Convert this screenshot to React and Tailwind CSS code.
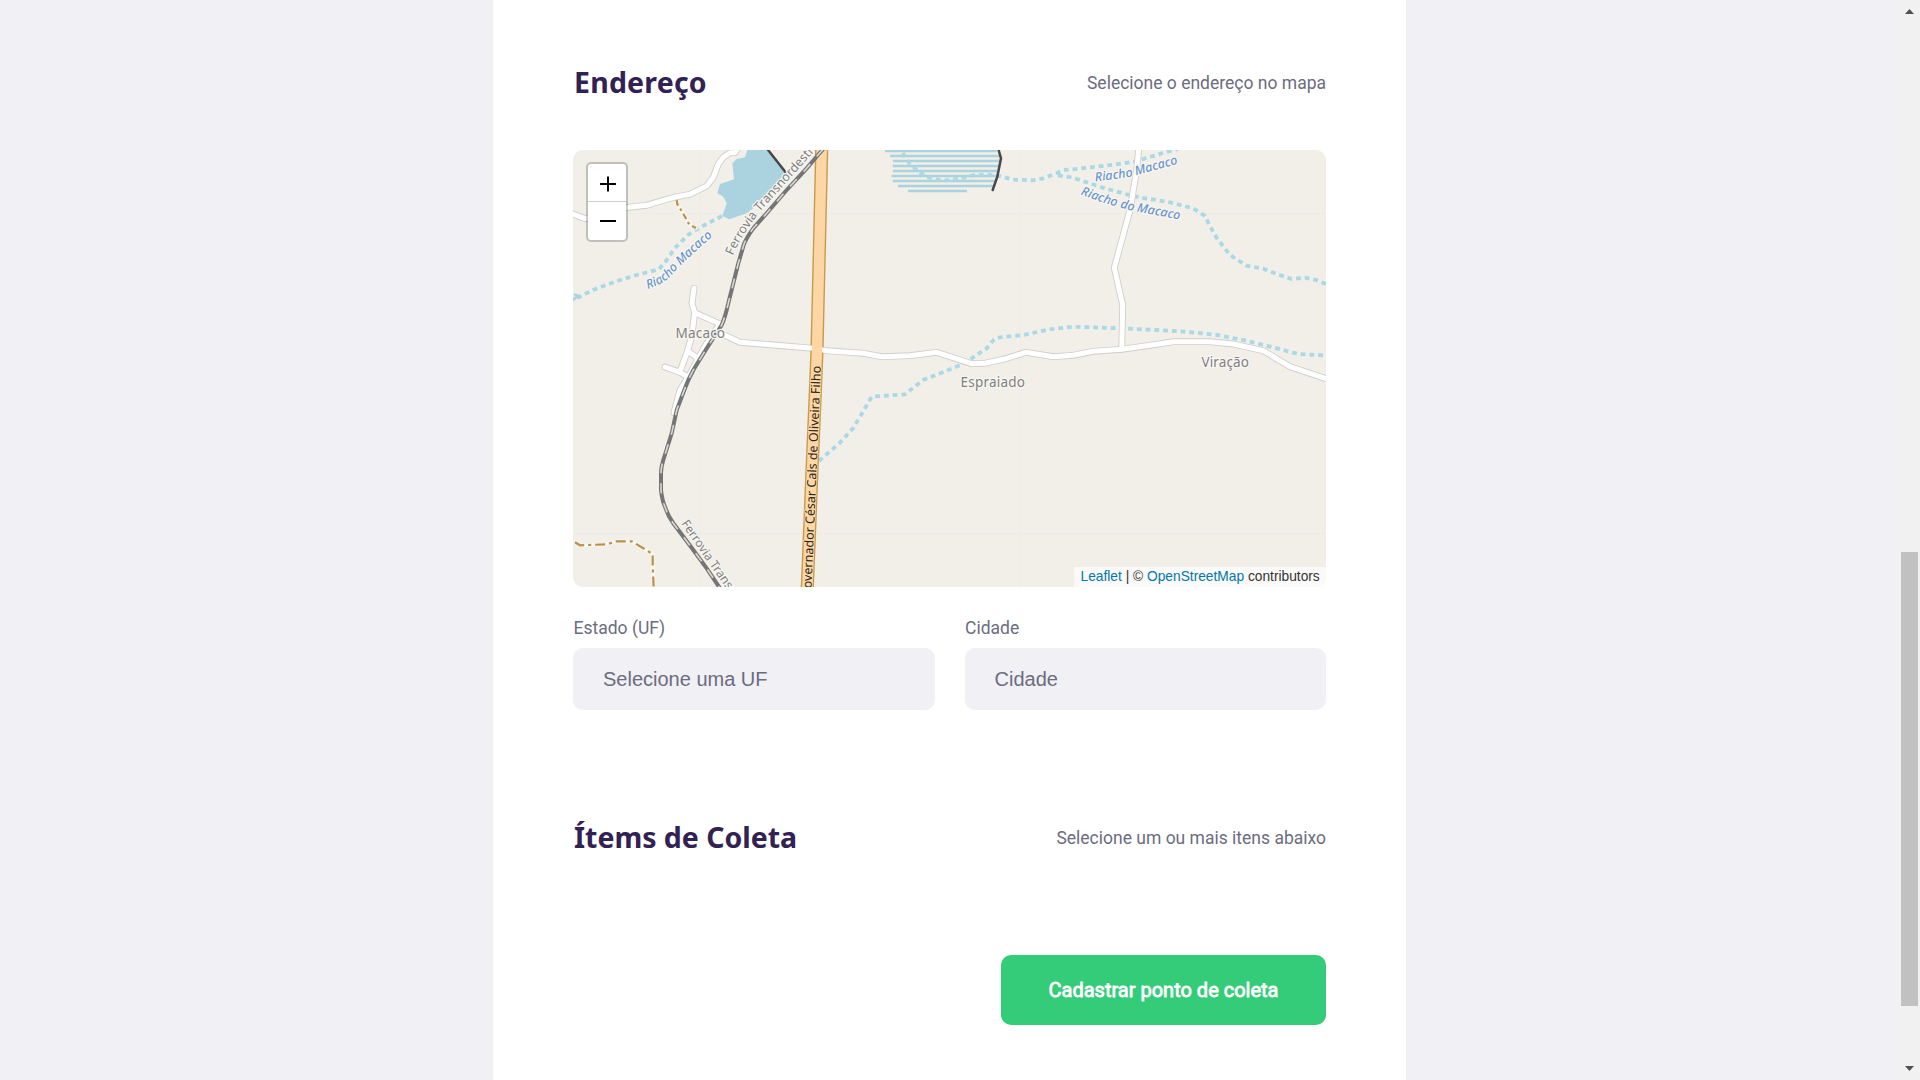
const minorRoads = [
  "M573 214L585 218.7L603 214L628.3 207.3L646.7 205.3L663.3 200.3L675 197L690 194.3L706.7 186L713.3 177.3L718.3 164L723.3 157.3L730 152.7L735 152.7L738 148",
  "M694 288.3L692 303.3L694.7 312.7L720 324",
  "M694.7 312.7L691.7 336.7L686.7 353.3L680 371.7",
  "M720 324L706.7 343.3L698.3 358.3L688.3 377L680 390L674 412.7",
  "M688.3 351.7L698.3 358.3",
  "M665 367L680 372.3L688 377",
  "M717 331.5L740 342.3L773.3 345L813.3 348.3L826.7 350.7L840 351.7L863.3 353.3L881.7 356.7L910 355.7L936.7 352.3L953.3 357.7L971.7 363.7L985 363.3L1003.3 359.3L1026 352.3L1053.3 356.7L1073.3 355.3L1093.3 351.3L1121.7 349.3L1150 345.3L1173.3 341.7L1210 341.7L1233.3 344L1263.3 350.7L1290 366.7L1328 379.3",
  "M1138.7 149L1136.7 170L1130 210L1120 246.7L1114.3 267.7L1122.7 305L1121.7 349.3",
];

const streams = [
  "M722 216L700 227.3L688 235L675 248L666.7 260L659 269.3L636.7 275L615 281.7L593 290L581.7 295.7L573 300",
  "M902.7 153L910 164L920 172.7L928 177.3L943 180.7L960 178.7L973 175.3L986.7 174.3L1000 176L1013 179.7L1033 180.3L1043 178.3L1056.7 173.3L1063.3 170L1073 169.3L1103 166L1133 162L1147 158L1163 153L1178 149",
  "M1058 175.3L1073 177.7L1103 187.7L1130 195.3L1141.7 197.7L1170 202.3L1193 208.3L1205 216L1210 226L1216.7 238L1230 255L1246.7 265.7L1263 268.7L1276.7 274L1291.7 279L1305 277.7L1315 279.7L1327 284.5",
  "M819 461L840 442.7L853 428.3L863 411.7L871.7 396.7L905 394.3L923 380L940 373.3L963 364L986.7 348.3L994 339.5L1000 337.3L1023 335L1050 329.3L1073 326.7L1120 328.3L1156.7 330L1186.7 331.7L1216.7 335L1243 340L1273 347.3L1298 354L1327 355.7",
];

const wetland = [
  [885, 996.7, 151], [890, 999, 156], [893, 999, 161], [892.7, 998.7, 166],
  [893, 997.3, 171], [891.7, 999, 176], [892.7, 995, 181], [898, 993, 186], [908, 967, 191],
];

const railway =
  "M823.3 149L818 155L806.7 168.3L786.7 190L766.7 213.3L753.3 228.3Q747 237 744 244L738.3 263.3L733.3 283.3L728.3 303.3Q725 318 721.7 325L706.7 348.3L693.3 370Q688 380 685 388.3L676.7 410L671.7 433.3L663.3 460Q661 467 661 473.3L661 490Q662 500 665 506.7Q668 516 673.3 523.3L693.3 550L706.7 568.3L720 588.3";

const highway = "M821.7 149L817 350L815 400L812 470L807.3 588";

const tracks = [
  ["M676.7 200L677.3 204L685 216.7L689.3 224.7L696 228", "6 3.5 2.5 3.5"],
  ["M575 542.3L580 545.3L606.7 544.3L616.7 541.3L631.7 541.3L643.3 548.3L652.7 554L652.7 566.7L653.7 588", "10 4 3 4"],
];

function PathLabel({ id, d, children, end, ...rest }) {
  return (
    <>
      <path id={id} d={d} fill="none" />
      <text {...rest} textAnchor={end ? "end" : "start"}>
        <textPath href={"#" + id} startOffset={end ? "100%" : "0"}>{children}</textPath>
      </text>
    </>
  );
}

function MapDrawing() {
  const halo = { paintOrder: "stroke", stroke: "#f8f6f2", strokeWidth: 2.5, strokeLinejoin: "round" };
  const gray = { ...halo, fill: "#808080" };
  const blue = { ...halo, fill: "#6a95cd", fontStyle: "italic", fontSize: 12.5, fontWeight: 500 };
  return (
    <svg viewBox="573 150 753 437" className="block h-full w-full" preserveAspectRatio="none" fontFamily="'Noto Sans', sans-serif">
      <rect x="573" y="150" width="753" height="437" fill="#f2efe9" />
      <path d="M700.5 150V587M1020.5 150V587M573 213.5H1326M573 533.5H1326" stroke="#eeebe6" strokeWidth="1" />
      <path d="M747.7 149L766 149L786 172.7L773 187L760 203L746.7 213.3L729.3 219.3L722.3 216L726.7 203.3L723.3 196.7L717.3 193.3L720 184L734 179.3L732.3 163.3L736.7 159L745 157.3Z" fill="#aad3df" />
      {wetland.map(([a, b, y]) => (
        <path key={y} d={`M${a} ${y}H${b}`} stroke="#aad3df" strokeWidth="2.6" />
      ))}
      <g fill="none" stroke="#aad8e4" strokeWidth="3.8" strokeDasharray="4.8 3.95">
        {streams.map((d) => <path key={d} d={d} />)}
      </g>
      <path d="M573 300L579 295M574 294L580 297" stroke="#aad3df" strokeWidth="2.5" />
      <g fill="none" stroke="#484848" strokeWidth="2.5" strokeLinecap="round">
        <path d="M767.3 149L786 172.7" />
        <path d="M998.3 149L1001 158.3L997.3 176.7L992.7 190" />
      </g>
      {tracks.map(([d, dash]) => (
        <g key={d} fill="none" strokeLinecap="round">
          <path d={d} stroke="#f8f6f0" strokeWidth="3.8" />
          <path d={d} stroke="#b8924a" strokeWidth="2.2" strokeLinecap="butt" strokeDasharray={dash} />
        </g>
      ))}
      <g fill="none" strokeLinejoin="round" strokeLinecap="round">
        <g stroke="#cfcecb" strokeWidth="6.8">
          {minorRoads.map((d) => <path key={d} d={d} />)}
        </g>
        <path d={highway} stroke="#c99a4a" strokeWidth="13.2" />
        <g stroke="#ffffff" strokeWidth="5">
          {minorRoads.map((d) => <path key={d} d={d} />)}
        </g>
        <path d={highway} stroke="#fcd6a4" strokeWidth="10.4" />
      </g>
      <g fill="none">
        <path d={railway} stroke="#757575" strokeWidth="4" />
        <path d={railway} stroke="#dad8d4" strokeWidth="1.6" strokeDasharray="10 10" />
      </g>
      <g fontSize="13.5">
        <text x="675.5" y="338.3" textLength="49.5" {...gray}>Macaco</text>
        <text x="960.5" y="386.5" textLength="64.5" {...gray}>Espraiado</text>
        <text x="1201.5" y="366.5" textLength="47.5" {...gray}>Viração</text>
      </g>
      <PathLabel id="riacho-oeste" d="M647.5 289Q667 283 675 271Q690 256 716 233" {...blue}>Riacho Macaco</PathLabel>
      <PathLabel id="riacho-norte" d="M1095 181.5Q1131 177.5 1137 175L1190 160.5" {...blue}>Riacho Macaco</PathLabel>
      <PathLabel id="riacho-do-macaco" d="M1080 194.5Q1120 209 1138 211.7L1192 222" {...blue}>Riacho do Macaco</PathLabel>
      <PathLabel id="ferrovia-norte" d="M733 255.5Q740 238 760 211.7L790 178.3L815 150.7L860 100" {...gray} fontSize="12.5">Ferrovia Transnordesti</PathLabel>
      <PathLabel id="ferrovia-sul" d="M681 523.5L726 588.3L800 694" {...gray} fontSize="12.2">Ferrovia Trans</PathLabel>
      <PathLabel id="rodovia" d="M806.5 700L811.5 588L816.5 470L819.5 400L820.8 366" end fontSize="12.5" fill="#2e2922" stroke="#fcd6a4" strokeWidth="1.5" style={{ paintOrder: "stroke" }}>
        overnador César Cals de Oliveira Filho
      </PathLabel>
    </svg>
  );
}

function ZoomControl() {
  return (
    <div className="absolute left-[13px] top-[12px] flex w-[42px] flex-col rounded-[5px] border-2 border-black/20 bg-white bg-clip-padding">
      <button className="flex h-[38px] items-center justify-center border-b border-[#cccccc] pl-[2px] pt-[2px]" aria-label="Zoom in">
        <svg width="16" height="16" viewBox="0 0 16 16"><path d="M0 8H16M8 0.5V15.5" stroke="#000" strokeWidth="2" /></svg>
      </button>
      <button className="flex h-[38px] items-center justify-center pl-[2px]" aria-label="Zoom out">
        <svg width="16" height="16" viewBox="0 0 16 16"><path d="M0 8H16" stroke="#000" strokeWidth="2" /></svg>
      </button>
    </div>
  );
}

function Legend({ title, hint, titleClass }) {
  return (
    <div className="flex h-10 items-center justify-between">
      <h2 className={"whitespace-nowrap pl-px font-['Noto_Sans',sans-serif] text-[28.5px] font-bold leading-10 text-[#322153] " + titleClass}>{title}</h2>
      <span className="whitespace-nowrap pt-[2px] text-[17.5px] leading-5">{hint}</span>
    </div>
  );
}

function Field({ label, value }) {
  return (
    <div className="flex flex-1 flex-col">
      <label className="mb-[10px] pl-[0.5px] text-[17.5px] leading-5">{label}</label>
      <div className="flex h-[62px] items-center rounded-[10px] bg-[#f0f0f5] px-[30px] font-['Liberation_Sans',Arial,sans-serif] text-xl">{value}</div>
    </div>
  );
}

export default function App() {
  return (
    <div className="flex h-[1080px] w-[1920px] overflow-hidden bg-[#f0f0f5] font-[Roboto,sans-serif] text-[#6c6c80]">
      <main className="flex flex-1 justify-center">
        <form className="flex w-[913px] flex-col bg-white px-20 pt-[62px]">
          <Legend title="Endereço" hint="Selecione o endereço no mapa" titleClass="tracking-[0.2px]" />
          <div className="relative mt-12 h-[437px] shrink-0 overflow-hidden rounded-[10px]">
            <MapDrawing />
            <ZoomControl />
            <div className="absolute bottom-0 right-0 h-5 whitespace-nowrap bg-white/70 px-[6.25px] font-['Liberation_Sans',Arial,sans-serif] text-[13.75px] leading-[19px] text-[#333333]">
              <span className="text-[#0078a8]">Leaflet</span> | © <span className="text-[#0078a8]">OpenStreetMap</span> contributors
            </div>
          </div>
          <div className="mt-[31px] flex gap-[30px]">
            <Field label="Estado (UF)" value="Selecione uma UF" />
            <Field label="Cidade" value="Cidade" />
          </div>
          <div className="mt-[107px]">
            <Legend title="Ítems de Coleta" hint="Selecione um ou mais itens abaixo" titleClass="tracking-[-0.02px]" />
          </div>
          <button type="button" className="mt-[98px] flex h-[70px] w-[325px] shrink-0 items-center justify-center self-end whitespace-nowrap rounded-[10px] bg-[#34cb79] text-xl text-white [-webkit-text-stroke:0.8px_white]">
            Cadastrar ponto de coleta
          </button>
        </form>
      </main>
      <div className="flex w-[21px] flex-col items-center justify-between bg-[#f1f1f1] pb-[9px] pt-[9px]">
        <svg width="9" height="5" viewBox="0 0 9 5"><path d="M0 5L4.5 0L9 5Z" fill="#505050" /></svg>
        <div className="mt-[538px] h-[454px] w-[17px] bg-[#c1c1c1]" />
        <svg className="mt-auto" width="9" height="5" viewBox="0 0 9 5"><path d="M0 0L4.5 5L9 0Z" fill="#505050" /></svg>
      </div>
    </div>
  );
}
